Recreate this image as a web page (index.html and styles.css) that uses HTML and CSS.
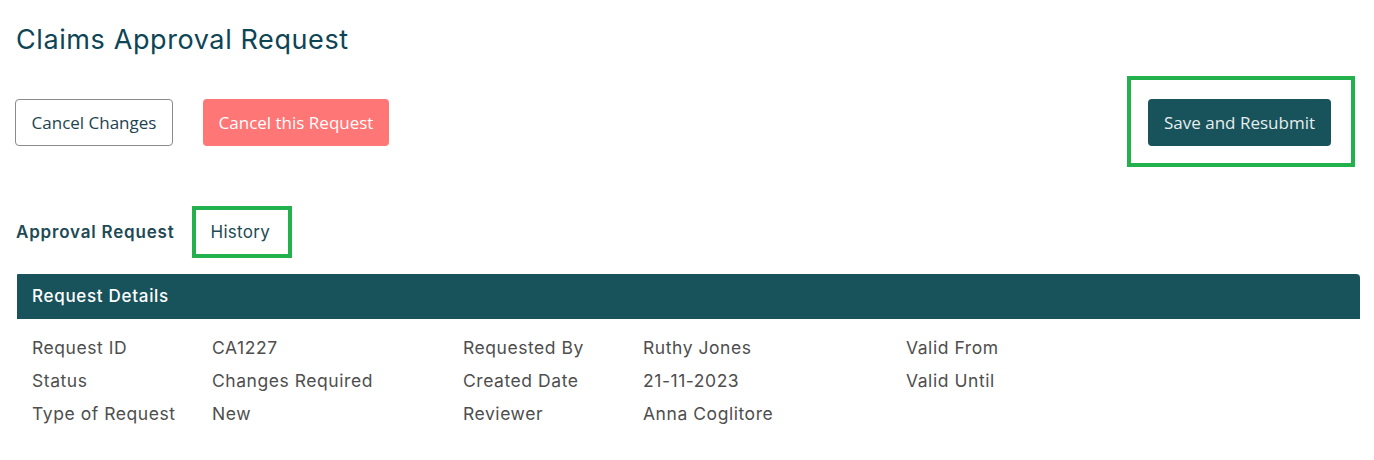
FILE: index.html
```html
<!DOCTYPE html>
<html>
<head>
<meta charset="utf-8">
<link rel="stylesheet" href="styles.css">
</head>
<body>
<div class="page">
  <h1 class="title">Claims Approval Request</h1>
  <div class="actions">
    <div class="actions-left">
      <button class="btn btn-outline">Cancel Changes</button>
      <button class="btn btn-danger">Cancel this Request</button>
    </div>
    <div class="highlight highlight-save">
      <button class="btn btn-primary">Save and Resubmit</button>
    </div>
  </div>
  <div class="tabs">
    <div class="tab tab-active">Approval Request</div>
    <div class="highlight highlight-tab"><div class="tab">History</div></div>
  </div>
  <div class="panel">
    <div class="panel-head">Request Details</div>
    <div class="panel-body">
      <div class="grid">
        <div class="lbl">Request ID</div><div class="val">CA1227</div>
        <div class="lbl">Requested By</div><div class="val">Ruthy Jones</div>
        <div class="lbl">Valid From</div><div class="val"></div>
        <div class="lbl">Status</div><div class="val">Changes Required</div>
        <div class="lbl">Created Date</div><div class="val">21-11-2023</div>
        <div class="lbl">Valid Until</div><div class="val"></div>
        <div class="lbl">Type of Request</div><div class="val">New</div>
        <div class="lbl">Reviewer</div><div class="val">Anna Coglitore</div>
        <div class="lbl"></div><div class="val"></div>
      </div>
    </div>
  </div>
</div>
</body>
</html>
```
FILE: styles.css
```css
* { box-sizing: border-box; }
body {
  margin: 0;
  background: #ffffff;
  font-family: "Inter", "Noto Sans", sans-serif;
  color: #4a4a4a;
}
.page {
  padding: 0 19px 0 16px;
}
.title {
  margin: 0;
  padding-top: 24px;
  height: 76px;
  font-size: 27px;
  font-weight: 400;
  color: #0d4456;
  letter-spacing: 0.6px;
  line-height: 32px;
}
.actions {
  display: flex;
  justify-content: space-between;
  align-items: center;
  height: 90px;
}
.actions-left {
  display: flex;
  gap: 30px;
  margin-left: -1px;
  align-self: flex-start;
  padding-top: 23px;
}
.btn {
  font-family: "Open Sans", "Noto Sans", sans-serif;
  font-size: 17px;
  height: 47px;
  border-radius: 4px;
  padding: 0 10px;
  border: 1px solid transparent;
  cursor: pointer;
}
.btn-outline {
  background: #fff;
  border-color: #8a8a8a;
  color: #1d4351;
  width: 158px;
}
.btn-danger {
  background: #ff7676;
  color: #fff;
  width: 186px;
}
.btn-primary {
  background: #18535b;
  color: #e6eeee;
  width: 183px;
}
.highlight {
  border: 4px solid #22b14c;
}
.highlight-save {
  width: 228px;
  height: 91px;
  display: flex;
  align-items: center;
  padding: 2px 0 0 17px;
}
.tabs {
  display: flex;
  align-items: center;
  gap: 18px;
  margin-top: 40px;
  height: 52px;
}
.tab {
  font-size: 17px;
  color: #1e4a55;
  letter-spacing: 0.3px;
}
.tab-active {
  font-weight: 600;
  color: #1e4a55;
  letter-spacing: 0.8px;
}
.highlight-tab {
  width: 100px;
  height: 52px;
  display: flex;
  align-items: center;
  padding-left: 14px;
}
.panel {
  margin-top: 16px;
  margin-left: 1px;
  margin-right: -5px;
}
.panel-head {
  background: #18535b;
  color: #fff;
  height: 45px;
  line-height: 45px;
  padding-left: 15px;
  font-size: 17px;
  font-weight: 500;
  letter-spacing: 0.7px;
  border-top-right-radius: 4px;
  border-top-left-radius: 1px;
}
.panel-body {
  padding: 12px 0 0 15px;
}
.grid {
  display: grid;
  grid-template-columns: 180px 251px 180px 263px 150px 1fr;
  grid-auto-rows: 33px;
  align-items: center;
  font-size: 17.5px;
  letter-spacing: 0.55px;
}
.lbl, .val { color: #4e4e4e; white-space: nowrap; }
```
